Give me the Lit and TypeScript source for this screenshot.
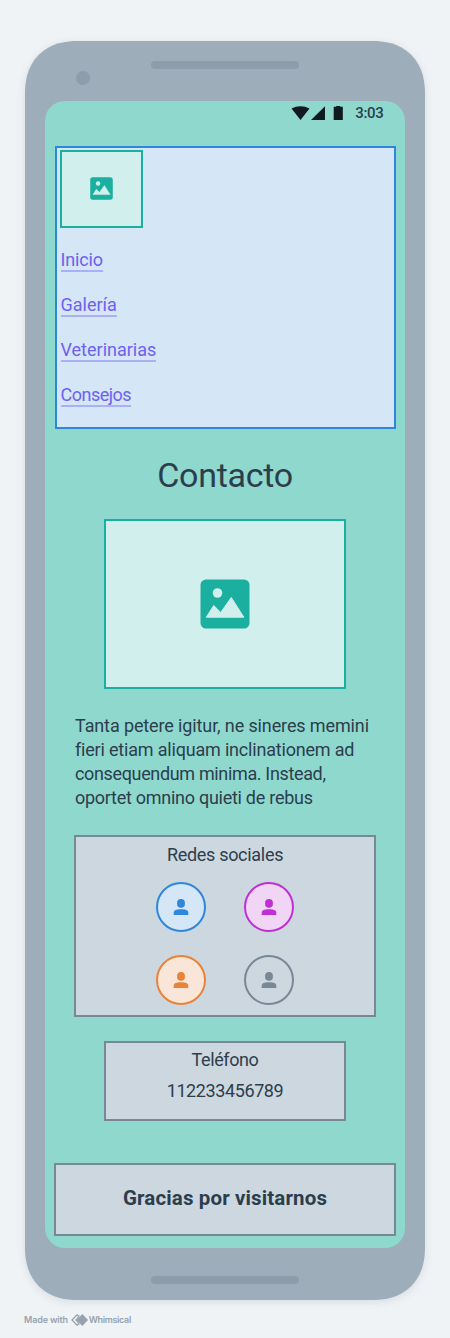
import { LitElement, html, css } from "lit";
import { customElement, property } from "lit/decorators.js";

@customElement("image-placeholder")
class ImagePlaceholder extends LitElement {
  static styles = css`
    :host { display: flex; align-items: center; justify-content: center; box-sizing: border-box;
      border: 2px solid #1baf9f; background: #d1efec; }
    .glyph { display: block; width: var(--glyph, 50px); height: var(--glyph, 50px); }
  `;
  render() {
    return html`<svg class="glyph" viewBox="-.5 -.5 50 50">
      <rect width="49" height="49" rx="5.5" fill="#1baf9f"></rect>
      <circle cx="17" cy="13.5" r="4.8" fill="#d1efec"></circle>
      <path d="M5.8 37.7 13.2 26 20.2 32.9 30.8 18 43.3 37.7Z" fill="#d1efec" stroke="#d1efec" stroke-linejoin="round"></path>
    </svg>`;
  }
}

@customElement("user-avatar")
class UserAvatar extends LitElement {
  @property({ reflect: true }) tone = "blue";
  static styles = css`
    :host { display: block; box-sizing: border-box; width: 50px; height: 50px; border-radius: 50%;
      border: 2px solid currentColor; }
    :host([tone="blue"]) { color: #2d88db; background: #d5e6f6; }
    :host([tone="magenta"]) { color: #bf30d3; background: #f1d5f5; }
    :host([tone="orange"]) { color: #e88339; background: #fae6d9; }
    :host([tone="grey"]) { color: #788896; background: #cdd7e0; }
    .person { display: block; width: 46px; height: 46px; }
  `;
  render() {
    return html`<svg class="person" viewBox="2 2 46 46" fill="currentColor">
      <rect x="21.1" y="17" width="7.8" height="8.7" rx="3.8"></rect>
      <path d="M17.7 33V31C17.7 28 20.2 27.2 25 27.2S32.3 28 32.3 31V33Z"></path>
    </svg>`;
  }
}

@customElement("app-root")
class AppRoot extends LitElement {
  static styles = css`
    :host { display: block; box-sizing: border-box; width: 450px; height: 1338px; padding: 41px 25px 0;
      background: #eff3f6; color: #2c3e4c; font: 18px/24px Roboto, "Liberation Sans", sans-serif; overflow: hidden; }
    .phone { box-sizing: border-box; height: 1259px; padding: 0 20px; border-radius: 50px; background: #9eadba;
      box-shadow: 0 2px 8px rgba(60, 80, 100, 0.13); display: flex; flex-direction: column; }
    @supports (corner-shape: superellipse(1.2)) {
      .phone { border-radius: 53px; corner-shape: superellipse(1.2); }
    }
    .top { height: 60px; display: grid; grid-template-columns: 106px 148px 1fr; align-items: start; }
    .camera { width: 14px; height: 14px; border-radius: 50%; background: #8d9dac; margin: 30px 0 0 31px; }
    .speaker { width: 148px; height: 8px; border-radius: 4px; background: #8d9dac; margin-top: 20px; }
    .bottom { display: flex; justify-content: center; padding-top: 8px; }
    .screen { height: 1147px; border-radius: 20px; background: #8ed8ce; display: flex; flex-direction: column;
      align-items: center; }
    .status { box-sizing: border-box; width: 100%; height: 45px; padding: 4px 21.5px 0 0; display: flex;
      justify-content: flex-end; align-items: flex-start; }
    .signals { width: 54px; height: 16px; margin-right: 10px; }
    .time { font-size: 15px; line-height: 17px; font-weight: 500; letter-spacing: -0.3px; }
    .nav { box-sizing: border-box; width: 341px; height: 283px; border: 2px solid #2d88db; background: #d5e6f6;
      padding: 2px 0 0 3px; display: flex; flex-direction: column; align-items: flex-start; }
    .thumb { width: 83px; height: 78px; padding-bottom: 1px; --glyph: 23px; }
    .links { display: flex; flex-direction: column; align-items: flex-start; gap: 21px; padding: 20px 0 0 1px; }
    .link { box-sizing: border-box; height: 24px; line-height: 24px; color: #6f61f0; text-decoration: none;
      border-bottom: 2px solid #abaff6; white-space: nowrap; }
    .link:first-child { letter-spacing: -0.15px; }
    .link:last-child { letter-spacing: -0.5px; }
    .title { margin: 26px 0 0; font-size: 34px; line-height: 40px; font-weight: 400; letter-spacing: -0.3px; }
    .photo { width: 242px; height: 170px; margin-top: 24px; }
    .copy { width: 300px; margin: 25px 0 0; white-space: nowrap; }
    .line { display: block; letter-spacing: -0.12px; }
    .line:nth-child(2) { letter-spacing: -0.19px; }
    .line:nth-child(3) { letter-spacing: -0.35px; }
    .line:nth-child(4) { letter-spacing: -0.27px; }
    .panel { box-sizing: border-box; border: 2px solid #788896; background: #cdd7e0; display: flex;
      flex-direction: column; align-items: center; }
    .social { width: 302px; height: 182px; margin-top: 25px; padding-top: 6px; letter-spacing: -0.3px; }
    .avatars { display: grid; grid-template-columns: 50px 50px; gap: 23px 38px; margin-top: 15px; }
    .contact { width: 242px; height: 80px; margin-top: 24px; padding-top: 5px; gap: 7px; letter-spacing: -0.4px; }
    .thanks { width: 342px; height: 73px; margin-top: 42px; padding-bottom: 3px; justify-content: center;
      font-size: 20.5px; font-weight: 700; letter-spacing: 0.13px; }
    .credit { display: flex; align-items: center; height: 14px; margin: 13px 0 0 -1px; color: #96a2ad;
      font: 600 9px/14px Inter, sans-serif; letter-spacing: -0.15px; }
    .mark { width: 18px; height: 12px; margin: 0 0 0 2.7px; }
    .brand { letter-spacing: -0.33px; }
  `;

  private links = ["Inicio", "Galería", "Veterinarias", "Consejos"];
  private lines = [
    "Tanta petere igitur, ne sineres memini",
    "fieri etiam aliquam inclinationem ad",
    "consequendum minima. Instead,",
    "oportet omnino quieti de rebus",
  ];

  render() {
    return html`
      <div class="phone">
        <div class="top"><div class="camera"></div><div class="speaker"></div></div>
        <div class="screen">
          <div class="status">
            <svg class="signals" viewBox="0 0 54 16" fill="#101a20">
              <path d="M.5 3.6C5.5.3 13.5.3 18.5 3.6L9.5 15Z"></path>
              <path d="M34 1.2V15H20Z"></path>
              <path d="M42.7 1.8H45.2V1H49.2V1.8H51.8V15H42.7Z"></path>
            </svg>
            <span class="time">3:03</span>
          </div>
          <nav class="nav">
            <image-placeholder class="thumb"></image-placeholder>
            <div class="links">${this.links.map((t) => html`<a class="link">${t}</a>`)}</div>
          </nav>
          <h1 class="title">Contacto</h1>
          <image-placeholder class="photo"></image-placeholder>
          <p class="copy">${this.lines.map((l) => html`<span class="line">${l}</span>`)}</p>
          <section class="panel social">
            <span>Redes sociales</span>
            <div class="avatars">
              ${["blue", "magenta", "orange", "grey"].map((t) => html`<user-avatar tone=${t}></user-avatar>`)}
            </div>
          </section>
          <section class="panel contact"><span>Teléfono</span><span>112233456789</span></section>
          <footer class="panel thanks">Gracias por visitarnos</footer>
        </div>
        <div class="bottom"><div class="speaker"></div></div>
      </div>
      <div class="credit">
        <span>Made with</span>
        <svg class="mark" viewBox="0 0 18 12">
          <path d="M8.3 2.4 6.1.9 1 6 6.1 11.1 8.3 9.6M8.3 2.4 5 6 8.3 9.6" fill="none" stroke="#96a2ad" stroke-width="1.3"></path>
          <path d="M11.3 0 17 6 11.3 12 5.6 6Z" fill="#96a2ad"></path>
        </svg>
        <span class="brand">Whimsical</span>
      </div>
    `;
  }
}
